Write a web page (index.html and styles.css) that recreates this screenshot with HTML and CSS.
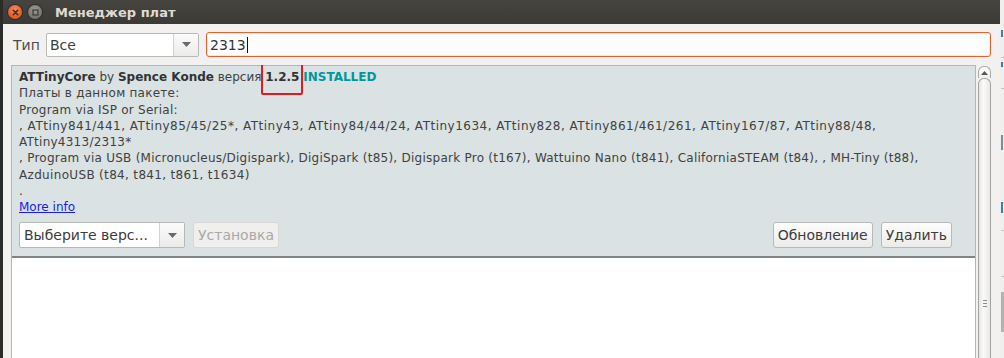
FILE: index.html
```html
<!DOCTYPE html>
<html lang="ru">
<head>
<meta charset="utf-8">
<title>Менеджер плат</title>
<link rel="stylesheet" href="styles.css">
</head>
<body>
<div class="screen">
  <div class="desk-left"></div>
  <div class="window">
    <div class="titlebar">
      <span class="wbtn close"><svg width="13" height="13" viewBox="0 0 13 13"><path d="M4.3 4.3 L8.7 8.7 M8.7 4.3 L4.3 8.7" stroke="#4a2a1c" stroke-width="1.6" stroke-linecap="round"/></svg></span>
      <span class="wbtn max"><svg width="13" height="13" viewBox="0 0 13 13"><rect x="4" y="4" width="5" height="5" fill="none" stroke="#3a3935" stroke-width="1.2"/></svg></span>
      <span class="title">Менеджер плат</span>
    </div>
    <div class="toolbar">
      <span class="label">Тип</span>
      <div class="combo type-combo">
        <span class="combo-text">Все</span>
        <span class="combo-arrow"><svg width="9" height="5" viewBox="0 0 9 5"><path d="M0 0 H9 L4.5 5 Z" fill="#6a6a6a"/></svg></span>
      </div>
      <div class="search"><span>2313</span><span class="caret"></span></div>
    </div>
    <div class="list">
      <div class="viewport">
        <div class="item">
          <div class="line"><b>ATTinyCore</b> by <b>Spence Konde</b> версия <b class="ver">1.2.5</b> <b class="inst">INSTALLED</b></div>
          <div class="line wide">Платы в данном пакете:</div>
          <div class="line wide">Program via ISP or Serial:</div>
          <div class="line wider">, ATtiny841/441, ATtiny85/45/25*, ATtiny43, ATtiny84/44/24, ATtiny1634, ATtiny828, ATtiny861/461/261, ATtiny167/87, ATtiny88/48,</div>
          <div class="line wide">ATtiny4313/2313*</div>
          <div class="line wide">, Program via USB (Micronucleus/Digispark), DigiSpark (t85), Digispark Pro (t167), Wattuino Nano (t841), CaliforniaSTEAM (t84), , MH-Tiny (t88),</div>
          <div class="line wide3">AzduinoUSB (t84, t841, t861, t1634)</div>
          <div class="line">.</div>
          <div class="line"><a class="more" href="#">More info</a></div>
          <div class="actions">
            <div class="combo ver-combo">
              <span class="combo-text">Выберите верс...</span>
              <span class="combo-arrow"><svg width="9" height="5" viewBox="0 0 9 5"><path d="M0 0 H9 L4.5 5 Z" fill="#6a6a6a"/></svg></span>
            </div>
            <button class="btn" disabled>Установка</button>
            <span class="spacer"></span>
            <button class="btn">Обновление</button>
            <button class="btn">Удалить</button>
          </div>
        </div>
        <div class="empty"></div>
      </div>
      <div class="scrollbar">
        <div class="sb-up"><svg width="7" height="4" viewBox="0 0 7 4"><path d="M0 4 L3.5 0 L7 4 Z" fill="#555"/></svg></div>
        <div class="sb-thumb"><span class="grip"></span><span class="grip"></span><span class="grip"></span></div>
      </div>
    </div>
  </div>
  <div class="desk-right">
    <span class="dr-blue dr-1"></span>
    <span class="dr-line dr-2"></span>
    <span class="dr-blue dr-3"></span>
    <span class="dr-line dr-4"></span>
    <span class="dr-blue dr-5"></span>
    <span class="dr-blue dr-6"></span>
    <span class="dr-line dr-7"></span>
    <span class="dr-line dr-8"></span>
    <span class="dr-grey"></span>
  </div>
</div>
</body>
</html>
```

FILE: styles.css
```css
* { box-sizing: border-box; }
html, body { margin: 0; padding: 0; }
body {
  width: 1004px;
  height: 358px;
  overflow: hidden;
  background: #2c2c2b;
  font-family: "DejaVu Sans", sans-serif;
}
.screen {
  display: flex;
  width: 1004px;
  height: 358px;
}
.desk-left {
  width: 3px;
  background: #2b2b2a;
}
.window {
  width: 997px;
  display: flex;
  flex-direction: column;
  background: #f2f1f0;
}
.titlebar {
  height: 24px;
  display: flex;
  align-items: center;
  background: linear-gradient(#46443f, #3b3a36);
  padding-left: 5px;
}
.wbtn {
  width: 14px;
  height: 14px;
  border-radius: 50%;
  display: flex;
  align-items: center;
  justify-content: center;
}
.wbtn.close {
  background: radial-gradient(circle at 50% 35%, #f78c5c, #e05a26 70%, #b8441c);
  box-shadow: 0 0 0 1px #2e2d2a;
}
.wbtn.max {
  margin-left: 6px;
  background: radial-gradient(circle at 50% 35%, #9c9a93, #74726b 75%);
  box-shadow: 0 0 0 1px #2e2d2a;
}
.title {
  margin-left: 13px;
  font-weight: bold;
  font-size: 13px;
  color: #dfdbd2;
}
.toolbar {
  display: flex;
  align-items: center;
  height: 25px;
  margin-top: 8px;
  padding-left: 10px;
}
.label {
  font-size: 14px;
  color: #4c4c4c;
  width: 33px;
}
.combo {
  display: flex;
  background: #fff;
  border: 1px solid #b8b8b6;
  border-radius: 2px;
  overflow: hidden;
}
.combo-text {
  flex: 1;
  font-size: 14px;
  color: #3c3c3c;
  padding-left: 3px;
  display: flex;
  align-items: center;
  white-space: nowrap;
}
.combo-arrow {
  width: 25px;
  border-left: 1px solid #d2d2d0;
  background: linear-gradient(#fbfbfb, #ebebea);
  display: flex;
  align-items: center;
  justify-content: center;
}
.type-combo {
  width: 153px;
  height: 24px;
}
.search {
  margin-left: 7px;
  width: 785px;
  height: 25px;
  border: 1px solid #e2632e;
  box-shadow: inset 0 0 0 1px #fbe6dc;
  border-radius: 3px;
  background: #fff;
  display: flex;
  align-items: center;
  padding-left: 3px;
  font-size: 14px;
  color: #333;
}
.caret {
  width: 1px;
  height: 16px;
  background: #111;
  margin-left: 1px;
}
.list {
  flex: 1;
  display: flex;
  margin-top: 8px;
  padding-left: 8px;
  min-height: 0;
  overflow: hidden;
}
.viewport {
  width: 965px;
  border: 1px solid #b6b6b3;
  border-bottom: none;
  display: flex;
  flex-direction: column;
  background: #fff;
}
.item {
  background: #dae2e3;
  padding: 3px 23px 8px 7px;
  border-bottom: 2px solid #7f8486;
  font-size: 12px;
  line-height: 16.25px;
  color: #414141;
}
.line {
  white-space: nowrap;
}
.line.wide {
  letter-spacing: 0.25px;
}
.line.wide3 {
  letter-spacing: 0.33px;
}
.line.wider {
  letter-spacing: 0.49px;
}
.line b {
  color: #333;
}
.ver {
  position: relative;
}
.ver::after {
  content: "";
  position: absolute;
  left: -4px;
  right: -4px;
  top: -8px;
  bottom: -11px;
  border: 2px solid #e4191b;
  border-radius: 2px;
}
.line b.inst {
  color: #00979c;
}
.more {
  color: #1c1ce8;
  text-decoration: underline;
}
.actions {
  display: flex;
  align-items: stretch;
  height: 26px;
  margin-top: 7px;
}
.ver-combo {
  width: 166px;
}
.ver-combo .combo-text {
  padding-left: 4px;
}
.btn {
  font-family: "DejaVu Sans", sans-serif;
  font-size: 14px;
  color: #3c3c3c;
  background: linear-gradient(#fdfdfd, #ecebea);
  border: 1px solid #b9b9b6;
  border-radius: 3px;
  padding: 0 4px;
  margin-left: 8px;
}
.btn:disabled {
  color: #a9a9a8;
  background: #f0efee;
  border-color: #d9d8d6;
}
.spacer {
  flex: 1;
}
.empty {
  flex: 1;
  background: #fff;
}
.scrollbar {
  width: 13px;
  margin-left: 2px;
  display: flex;
  flex-direction: column;
  padding-top: 1px;
}
.sb-up {
  height: 12px;
  border: 1px solid #a9a9a6;
  border-bottom: none;
  border-radius: 6px 6px 0 0;
  background: linear-gradient(#ffffff, #eeeeec);
  display: flex;
  justify-content: center;
  padding-top: 4px;
}
.sb-thumb {
  flex: 1;
  border: 1px solid #a3a3a0;
  border-bottom: none;
  border-radius: 6px 6px 0 0;
  background: linear-gradient(90deg, #e6e5e3, #fafaf9 40%, #e9e8e6);
  display: flex;
  flex-direction: column;
  align-items: center;
  padding-top: 221px;
  gap: 2px;
}
.grip {
  width: 4px;
  height: 1px;
  background: #8b8b88;
}
.desk-right {
  width: 4px;
  background: #efefed;
  display: flex;
  flex-direction: column;
  padding-left: 1px;
}
.dr-blue { background: #3d7fb5; width: 2px; }
.dr-line { height: 1px; background: #c6c6c4; }
.dr-1 { margin-top: 30px; height: 7px; }
.dr-2 { margin-top: 20px; }
.dr-3 { margin-top: 4px; height: 5px; }
.dr-4 { margin-top: 21px; }
.dr-5 { margin-top: 46px; height: 15px; background: #7a8ea0; }
.dr-6 { margin-top: 52px; height: 11px; }
.dr-7 { margin-top: 17px; }
.dr-8 { margin-top: 45px; }
.dr-grey { margin-top: 15px; height: 40px; background: #b1b1af; }
```
